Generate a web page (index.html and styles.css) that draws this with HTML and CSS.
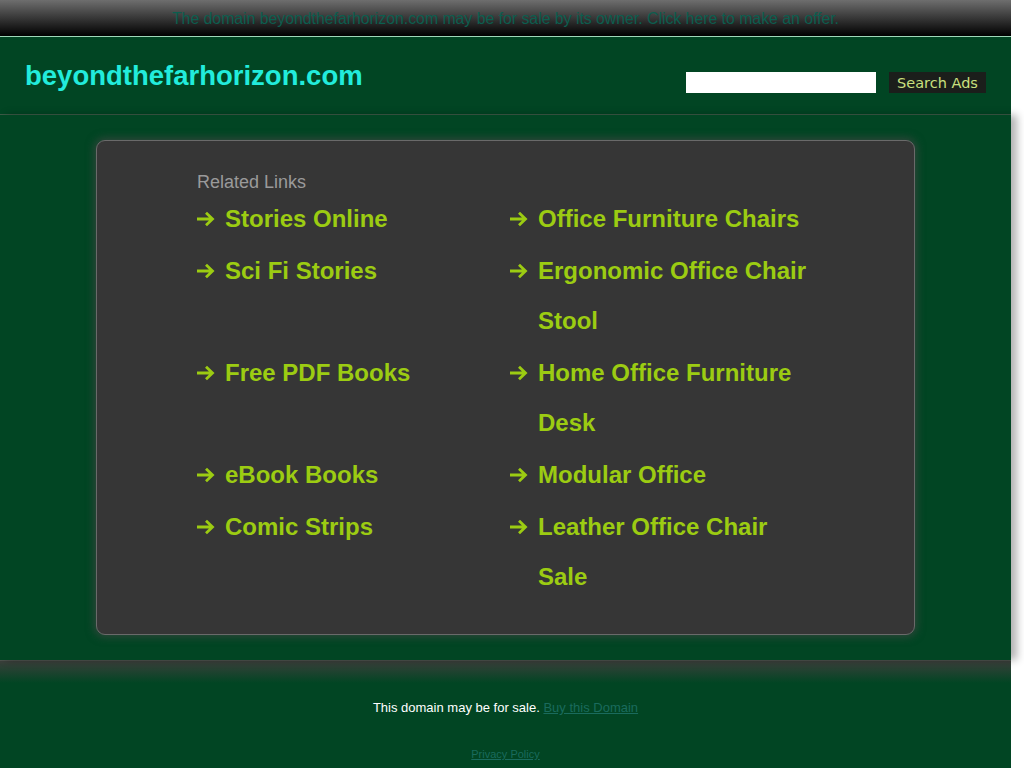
FILE: index.html
```html
<!DOCTYPE html>
<html>
<head>
<meta charset="utf-8">
<title>beyondthefarhorizon.com</title>
<link rel="stylesheet" href="styles.css">
</head>
<body>
<div class="page">
  <div class="topbar"><a href="#">The domain beyondthefarhorizon.com may be for sale by its owner. Click here to make an offer.</a></div>
  <header class="header">
    <h1 class="title">beyondthefarhorizon.com</h1>
    <form class="search">
      <input class="search-input" type="text">
      <button class="search-btn" type="button">Search Ads</button>
    </form>
  </header>
  <main class="main">
    <section class="card">
      <div class="related">Related Links</div>
      <div class="links">
        <div class="link"><span class="arrow"><svg width="19" height="16" viewBox="0 0 19 16"><path d="M1 8H16.5M10 1.8L16.5 8L10 14.2" fill="none" stroke="#9ccc12" stroke-width="2.8"/></svg></span><a href="#">Stories Online</a></div>
        <div class="link"><span class="arrow"><svg width="19" height="16" viewBox="0 0 19 16"><path d="M1 8H16.5M10 1.8L16.5 8L10 14.2" fill="none" stroke="#9ccc12" stroke-width="2.8"/></svg></span><a href="#">Office Furniture Chairs</a></div>
        <div class="link"><span class="arrow"><svg width="19" height="16" viewBox="0 0 19 16"><path d="M1 8H16.5M10 1.8L16.5 8L10 14.2" fill="none" stroke="#9ccc12" stroke-width="2.8"/></svg></span><a href="#">Sci Fi Stories</a></div>
        <div class="link"><span class="arrow"><svg width="19" height="16" viewBox="0 0 19 16"><path d="M1 8H16.5M10 1.8L16.5 8L10 14.2" fill="none" stroke="#9ccc12" stroke-width="2.8"/></svg></span><a href="#">Ergonomic Office Chair Stool</a></div>
        <div class="link"><span class="arrow"><svg width="19" height="16" viewBox="0 0 19 16"><path d="M1 8H16.5M10 1.8L16.5 8L10 14.2" fill="none" stroke="#9ccc12" stroke-width="2.8"/></svg></span><a href="#">Free PDF Books</a></div>
        <div class="link"><span class="arrow"><svg width="19" height="16" viewBox="0 0 19 16"><path d="M1 8H16.5M10 1.8L16.5 8L10 14.2" fill="none" stroke="#9ccc12" stroke-width="2.8"/></svg></span><a href="#">Home Office Furniture Desk</a></div>
        <div class="link"><span class="arrow"><svg width="19" height="16" viewBox="0 0 19 16"><path d="M1 8H16.5M10 1.8L16.5 8L10 14.2" fill="none" stroke="#9ccc12" stroke-width="2.8"/></svg></span><a href="#">eBook Books</a></div>
        <div class="link"><span class="arrow"><svg width="19" height="16" viewBox="0 0 19 16"><path d="M1 8H16.5M10 1.8L16.5 8L10 14.2" fill="none" stroke="#9ccc12" stroke-width="2.8"/></svg></span><a href="#">Modular Office</a></div>
        <div class="link"><span class="arrow"><svg width="19" height="16" viewBox="0 0 19 16"><path d="M1 8H16.5M10 1.8L16.5 8L10 14.2" fill="none" stroke="#9ccc12" stroke-width="2.8"/></svg></span><a href="#">Comic Strips</a></div>
        <div class="link"><span class="arrow"><svg width="19" height="16" viewBox="0 0 19 16"><path d="M1 8H16.5M10 1.8L16.5 8L10 14.2" fill="none" stroke="#9ccc12" stroke-width="2.8"/></svg></span><a href="#">Leather Office Chair Sale</a></div>
      </div>
    </section>
  </main>
  <footer class="footer">
    <p class="sale">This domain may be for sale. <a href="#">Buy this Domain</a></p>
    <p class="privacy"><a href="#">Privacy Policy</a></p>
  </footer>
</div>
</body>
</html>
```
FILE: styles.css
```css
html, body {
  margin: 0;
  padding: 0;
  background: #ffffff;
  font-family: "Liberation Sans", Arial, sans-serif;
}
.page {
  width: 1011px;
  background: #014523;
}
.topbar {
  height: 36px;
  border-bottom: 1px solid #9fd8b8;
  background: linear-gradient(#6e6e6e, #000000);
  text-align: center;
  line-height: 38px;
  font-size: 15.8px;
}
.topbar a {
  color: #0c5e4f;
  text-decoration: none;
}
.header {
  display: flex;
  justify-content: space-between;
  align-items: flex-start;
  height: 77px;
  padding: 0 25px;
  border-bottom: 1px solid #3d5b47;
  box-sizing: content-box;
}
.title {
  margin: 23px 0 0;
  font-size: 27.5px;
  line-height: 32px;
  font-weight: bold;
  color: #22ecdc;
}
.search {
  display: flex;
  gap: 13px;
  margin-top: 35px;
}
.search-input {
  width: 190px;
  height: 21px;
  border: none;
  padding: 0;
  margin: 0;
  background: #fff;
}
.search-btn {
  width: 97px;
  height: 21px;
  border: none;
  padding: 0;
  margin: 0;
  background: #1b1e1b;
  color: #c9e07f;
  font-family: "DejaVu Sans", sans-serif;
  font-size: 14.5px;
}
.main {
  padding: 25px 0;
  box-shadow: 6px 0 8px rgba(0, 0, 0, 0.3);
  position: relative;
}
.card {
  width: 819px;
  margin: 0 auto;
  border: 1px solid #6a6a6a;
  border-radius: 9px;
  background: #363636;
  box-shadow: 0 0 8px 2px rgba(70, 70, 70, 0.7);
  padding: 30px 0 30px 100px;
  box-sizing: border-box;
  height: 495px;
}
.related {
  font-size: 18px;
  line-height: 22px;
  margin-bottom: 1px;
  color: #9a9a9a;
}
.links {
  display: grid;
  grid-template-columns: 313px 306px;
  margin-left: -1px;
}
.link {
  display: flex;
  margin-bottom: 2px;
  font-size: 24px;
  line-height: 50px;
  font-weight: bold;
}
.arrow {
  flex: 0 0 29px;
  display: flex;
  align-items: center;
  height: 50px;
}
.arrow svg {
  display: block;
  margin-top: -1px;
}
.link a {
  color: #9ccc12;
  text-decoration: none;
}
.footer {
  border-top: 1px solid #4d524d;
  background: linear-gradient(#3b3f3b, #014523 22px);
  height: 107px;
  text-align: center;
  overflow: hidden;
}
.sale {
  margin: 39px 0 0;
  font-size: 13px;
  line-height: 16px;
  color: #ffffff;
}
.sale a {
  color: #1a6b5d;
}
.privacy {
  margin: 31px 0 0;
  font-size: 11px;
  line-height: 14px;
}
.privacy a {
  color: #1a6b5d;
}
```
